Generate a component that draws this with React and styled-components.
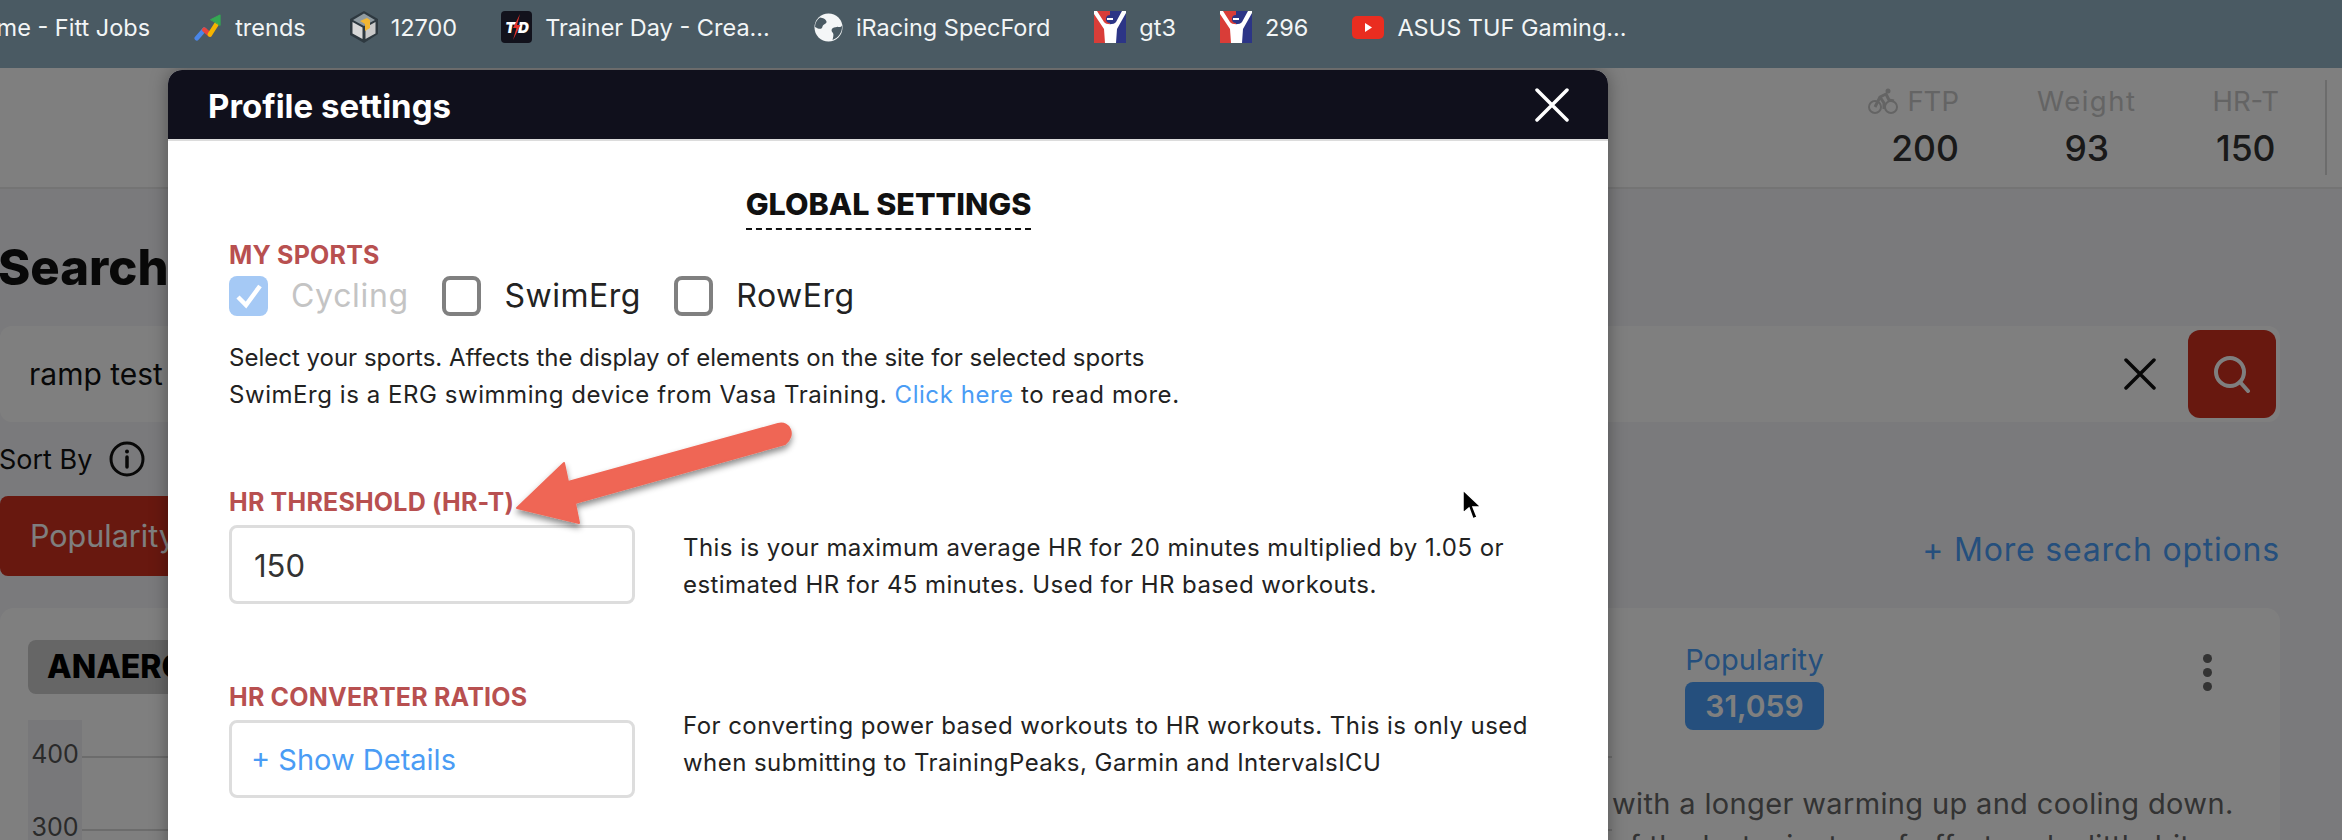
import React from "react";
import styled, { createGlobalStyle } from "styled-components";

const SANS = `"Inter", "Open Sans", "Liberation Sans", sans-serif`;

const GlobalStyle = createGlobalStyle`
  html, body {
    margin: 0;
    padding: 0;
    width: 2342px;
    height: 840px;
    overflow: hidden;
    background: #f4f4f8;
  }
  * { box-sizing: border-box; }
`;

const Screen = styled.div`
  width: 2342px;
  height: 840px;
  overflow: hidden;
  display: flex;
  flex-direction: column;
  font-family: ${SANS};
`;

/* browser bookmarks */
const BookmarkBar = styled.div`
  flex: 0 0 68px;
  background: #4a5a63;
  display: flex;
  align-items: flex-start;
  gap: 44px;
  padding-top: 11px;
  overflow: hidden;
  white-space: nowrap;
`;
const Bookmark = styled.div`
  display: flex;
  align-items: center;
  gap: 13px;
  height: 32px;
  color: #f2f5f6;
  font-size: 23.5px;
  svg { flex: none; }
`;
const ClippedBookmark = styled(Bookmark)`
  margin-left: -35px;
`;

/* page behind the dialog */
const Stage = styled.div`
  position: relative;
  flex: 1;
  overflow: hidden;
  background: #f5f5f8;
`;
const TopBar = styled.header`
  height: 121px;
  background: #ffffff;
  border-bottom: 2px solid #e8e8e8;
  display: flex;
  justify-content: flex-end;
  align-items: center;
  padding-right: 15px;
`;
const Stats = styled.div`
  display: flex;
  gap: 76px;
  padding-right: 46px;
  height: 95px;
  padding-top: 2px;
  border-right: 2px solid #d8d8d8;
`;
const Stat = styled.div`
  display: flex;
  flex-direction: column;
  align-items: ${(p) => (p.$end ? "flex-end" : "center")};
  margin-right: ${(p) => (p.$end ? 2 : 0)}px;
  gap: 8px;
`;
const StatLabel = styled.div`
  display: flex;
  align-items: center;
  gap: 9px;
  color: #c8c8c8;
  font-size: 27.5px;
  letter-spacing: ${(p) => (p.$wide ? 1.5 : 0)}px;
  line-height: 38px;
`;
const StatValue = styled.div`
  color: #333;
  font-size: 35.5px;
  font-weight: 500;
  line-height: 42px;
`;
const Content = styled.main`
  padding-right: 62px;
`;
const PageTitle = styled.h1`
  margin: 43px 0 0 -2px;
  font-size: 49px;
  font-weight: 800;
  line-height: 72px;
  color: #111;
`;
const SearchBar = styled.div`
  margin-top: 22px;
  height: 96px;
  background: #ffffff;
  border-radius: 12px;
  display: flex;
  align-items: center;
  padding: 0 4px 0 29px;
`;
const SearchText = styled.div`
  flex: 1;
  font-size: 30px;
  color: #111;
`;
const ClearIcon = styled.svg`
  width: 32px;
  height: 32px;
  margin-right: 32px;
`;
const SearchButton = styled.button`
  width: 88px;
  height: 88px;
  border: 0;
  border-radius: 12px;
  background: #d1301f;
  display: flex;
  align-items: center;
  justify-content: center;
  padding: 0;
`;
const SortRow = styled.div`
  margin: 18px 0 0 -1px;
  height: 38px;
  display: flex;
  align-items: center;
  gap: 17px;
  font-size: 27px;
  color: #111;
`;
const SortOptions = styled.div`
  margin-top: 18px;
  height: 80px;
  display: flex;
  justify-content: space-between;
  align-items: flex-end;
`;
const SortButton = styled.div`
  width: 300px;
  height: 80px;
  border-radius: 8px;
  background: #d1301f;
  color: #ffffff;
  font-size: 30.5px;
  line-height: 80px;
  padding-left: 30px;
`;
const MoreLink = styled.div`
  color: #4a9ffa;
  font-size: 32px;
  letter-spacing: 0.8px;
  line-height: 52px;
`;
const Card = styled.section`
  margin-top: 32px;
  height: 300px;
  background: #ffffff;
  border-radius: 14px;
  padding: 32px 0 0 28px;
  display: flex;
`;
const CardLeft = styled.div`
  width: 1584px;
`;
const Zone = styled.div`
  display: inline-block;
  height: 54px;
  line-height: 54px;
  padding: 0 19px;
  border-radius: 8px;
  background: #cccccc;
  color: #000;
  font-size: 32px;
  font-weight: 800;
`;
const Chart = styled.div`
  margin-top: 26px;
`;
const AxisRow = styled.div`
  height: 73px;
  display: flex;
  align-items: center;
`;
const AxisLabel = styled.div`
  width: 54px;
  height: 100%;
  background: #f0f0f4;
  color: #555;
  font-size: 25px;
  line-height: 69px;
  text-align: center;
`;
const GridLine = styled.div`
  flex: 1;
  height: 2px;
  background: #d8d8d8;
`;
const CardRight = styled.div`
  width: 625px;
`;
const CardHead = styled.div`
  display: flex;
  justify-content: space-between;
  padding: 0 25px 0 73px;
  height: 90px;
`;
const Popularity = styled.div`
  width: 139px;
  color: #4a9ffa;
  font-size: 29px;
  line-height: 40px;
  text-align: center;
  white-space: nowrap;
`;
const PopularityValue = styled.div`
  margin-top: 2px;
  height: 48px;
  border-radius: 8px;
  background: #4a9ffa;
  color: #ffffff;
  font-size: 30px;
  font-weight: 600;
  line-height: 48px;
`;
const Dots = styled.div`
  margin-top: 14px;
  display: flex;
  flex-direction: column;
  gap: 5px;
  span {
    display: block;
    width: 9px;
    height: 9px;
    border-radius: 50%;
    background: #666;
  }
`;
const Description = styled.p`
  margin: 53px 0 0;
  width: 720px;
  color: #666;
  font-size: 29px;
  letter-spacing: 0.35px;
  line-height: 42px;
`;

const Dim = styled.div`
  position: absolute;
  inset: 0;
  background: rgba(0, 0, 0, 0.5);
`;

/* dialog */
const Dialog = styled.div`
  position: absolute;
  top: 2px;
  left: 168px;
  width: 1440px;
  height: 900px;
  background: #ffffff;
  border-radius: 14px 14px 0 0;
  box-shadow: 0 0 18px rgba(0, 0, 0, 0.35);
`;
const DialogHead = styled.div`
  height: 71px;
  background: #10101c;
  border-radius: 14px 14px 0 0;
  border-bottom: 2px solid #dcdcdc;
  display: flex;
  align-items: center;
  justify-content: space-between;
  padding: 3px 39px 0 40px;
  color: #fff;
  font-size: 33px;
  font-weight: 700;
`;
const CloseIcon = styled.svg`
  margin-top: -3px;
`;
const DialogBody = styled.div`
  padding: 46px 60px 0 61px;
`;
const GlobalHeading = styled.div`
  width: fit-content;
  margin: 0 auto;
  border-bottom: 2px dashed #111;
  color: #111;
  font-size: 30.5px;
  font-weight: 800;
  line-height: 34px;
  height: 43px;
`;
const FieldLabel = styled.div`
  color: #b85050;
  font-size: 25px;
  font-weight: 700;
  line-height: 36px;
  letter-spacing: 0.2px;
`;
const SportsLabel = styled(FieldLabel)`
  margin-top: 7px;
`;
const Sports = styled.div`
  display: flex;
  align-items: center;
  gap: 33.5px;
  margin-top: 3px;
`;
const Sport = styled.label`
  display: flex;
  align-items: center;
  gap: 23px;
  font-size: 32px;
  letter-spacing: ${(p) => (p.$disabled ? 0.7 : 0.5)}px;
  line-height: 40px;
  color: ${(p) => (p.$disabled ? "#c4c4c4" : "#222")};
`;
const Box = styled.span`
  width: 39px;
  height: 40px;
  border-radius: 8px;
  display: flex;
  align-items: center;
  justify-content: center;
  background: ${(p) => (p.$checked ? "#a5c9f5" : "#fff")};
  border: ${(p) => (p.$checked ? "0" : "4px solid #808080")};
`;
const Help = styled.p`
  margin: ${(p) => p.$top || 0}px 0 0;
  color: #222;
  font-size: 24px;
  line-height: 36.5px;
`;
const WideLine = styled.span`
  letter-spacing: 0.55px;
`;
const Link = styled.a`
  color: #4a9cf5;
`;
const Field = styled.div`
  margin-top: ${(p) => p.$top}px;
`;
const FieldRow = styled.div`
  display: flex;
  gap: 48px;
  margin-top: 5px;
`;
const InputBox = styled.div`
  flex: 0 0 406px;
  height: ${(p) => p.$h}px;
  border: 3px solid #dddddd;
  border-radius: 8px;
  display: flex;
  align-items: center;
  padding: ${(p) => (p.$link ? "0 0 0 19px" : "2px 0 0 22px")};
  font-size: ${(p) => (p.$link ? 29 : 31)}px;
  color: ${(p) => (p.$link ? "#4a9cf5" : "#333")};
`;
const FieldHelp = styled(Help)`
  letter-spacing: 0.45px;
`;

const ArrowLayer = styled.svg`
  position: absolute;
  left: 0;
  top: 0;
  overflow: visible;
  pointer-events: none;
`;
const Pointer = styled.svg`
  position: absolute;
  left: 1461px;
  top: 421px;
`;

function TrendsIcon() {
  return (
    <svg width="28" height="32" viewBox="0 0 30 32" fill="none" strokeWidth="5" strokeLinecap="round" strokeLinejoin="round">
      <path d="M3 28 L11 19" stroke="#4a86e8" />
      <path d="M11 19 L17 24" stroke="#e8453c" />
      <path d="M17 24 L24 13" stroke="#f4b400" />
      <path d="M18 8 L28 3 L28 14 Z" fill="#34a853" stroke="#34a853" strokeWidth="1" />
    </svg>
  );
}

function CubeIcon() {
  return (
    <svg width="28" height="32" viewBox="0 0 28 32">
      <path d="M14 0 L28 8 V23 L14 32 L0 24 V8 Z" fill="#2e3940" />
      <path d="M14 2.5 L25 9 L14 15 L3 9 Z" fill="#8f9aa0" />
      <path d="M2.5 11 L12.5 16.5 V28 L2.5 22.5 Z" fill="#d8d8d8" />
      <path d="M15.5 16.5 L25.5 11 V22.5 L15.5 28 Z" fill="#c9c9c9" />
      <path d="M10 10 L17 7 L20 9 V17 L15 20 V13 Z" fill="#f2b632" />
    </svg>
  );
}

function TrainerDayIcon() {
  return (
    <svg width="31" height="32" viewBox="0 0 31 32">
      <rect width="31" height="32" rx="4" fill="#12121c" />
      <text x="4" y="22" fill="#fff" fontSize="15" fontWeight="900" fontStyle="italic" fontFamily="Inter, sans-serif">T</text>
      <text x="17" y="22" fill="#fff" fontSize="15" fontWeight="900" fontStyle="italic" fontFamily="Inter, sans-serif">D</text>
      <path d="M19 3 L12 17 H15.5 L12 29 L19.5 14 H16 Z" fill="#e5322a" />
    </svg>
  );
}

function GlobeIcon() {
  return (
    <svg width="29" height="29" viewBox="0 0 29 29">
      <circle cx="14.5" cy="14.5" r="14" fill="#f4f6f7" />
      <path d="M6 4.5 C9 5 12 6 12.5 8.5 C13 11 9 11 8.5 13.5 C8 16 6 17 1 14 C1 10 3 6.5 6 4.5 Z" fill="#4a5a63" />
      <path d="M28 12.5 C27 15 24 13.5 20 14.5 C17 15.5 17 18 19 20 C20 22 19 24.5 18.5 27 C24 25 28.5 20 28 12.5 Z" fill="#4a5a63" />
    </svg>
  );
}

function RacerIcon() {
  return (
    <svg width="32" height="32" viewBox="0 0 32 32">
      <rect width="16" height="32" fill="#d93d38" />
      <rect x="16" width="16" height="32" fill="#2c3586" />
      <path d="M0 0 H3 L10 11 C12 14 20 14 22 11 L28 0 H32 L32 2 L23 18 L22 32 H11 L10 18 L0 3 Z" fill="#fff" />
      <circle cx="16" cy="8" r="4" fill="#2c3586" />
      <rect x="13" y="7" width="6" height="2" fill="#fff" />
    </svg>
  );
}

function YoutubeIcon() {
  return (
    <svg width="32" height="23" viewBox="0 0 32 23">
      <rect width="32" height="23" rx="5" fill="#ea2d20" />
      <path d="M13 7 L20 11.5 L13 16 Z" fill="#fff" />
    </svg>
  );
}

function BikeIcon() {
  return (
    <svg width="30" height="26" viewBox="0 0 30 26" fill="none" stroke="#c8c8c8" strokeWidth="2">
      <circle cx="7" cy="19" r="6" />
      <circle cx="23" cy="19" r="6" />
      <circle cx="20" cy="3" r="2.5" fill="#c8c8c8" stroke="none" />
      <path d="M7 19 L12 9 L18 6 L21 12 L26 13 M12 9 L16 15 V21" strokeWidth="3" strokeLinejoin="round" />
    </svg>
  );
}

function InfoIcon() {
  return (
    <svg width="36" height="36" viewBox="0 0 36 36" fill="none" stroke="#111" strokeWidth="3">
      <circle cx="18" cy="18" r="16" />
      <path d="M18 16 V26" strokeLinecap="round" strokeWidth="3.5" />
      <circle cx="18" cy="10.5" r="2" fill="#111" stroke="none" />
    </svg>
  );
}

function App() {
  return (
    <Screen>
      <GlobalStyle />
      <BookmarkBar>
        <ClippedBookmark>Home - Fitt Jobs</ClippedBookmark>
        <Bookmark><TrendsIcon />trends</Bookmark>
        <Bookmark><CubeIcon />12700</Bookmark>
        <Bookmark><TrainerDayIcon />Trainer Day - Crea...</Bookmark>
        <Bookmark><GlobeIcon />iRacing SpecFord</Bookmark>
        <Bookmark><RacerIcon />gt3</Bookmark>
        <Bookmark><RacerIcon />296</Bookmark>
        <Bookmark><YoutubeIcon />ASUS TUF Gaming...</Bookmark>
      </BookmarkBar>
      <Stage>
        <TopBar>
          <Stats>
            <Stat $end>
              <StatLabel><BikeIcon />FTP</StatLabel>
              <StatValue>200</StatValue>
            </Stat>
            <Stat>
              <StatLabel $wide>Weight</StatLabel>
              <StatValue>93</StatValue>
            </Stat>
            <Stat>
              <StatLabel>HR-T</StatLabel>
              <StatValue>150</StatValue>
            </Stat>
          </Stats>
        </TopBar>
        <Content>
          <PageTitle>Search</PageTitle>
          <SearchBar>
            <SearchText>ramp test</SearchText>
            <ClearIcon viewBox="0 0 32 32" fill="none" stroke="#111" strokeWidth="3.5" strokeLinecap="round">
              <path d="M2 2 L30 30 M30 2 L2 30" />
            </ClearIcon>
            <SearchButton>
              <svg width="38" height="38" viewBox="0 0 38 38" fill="none" stroke="#fff" strokeWidth="4" strokeLinecap="round">
                <circle cx="17" cy="17" r="14" />
                <path d="M27 27 L35 36" />
              </svg>
            </SearchButton>
          </SearchBar>
          <SortRow>Sort By <InfoIcon /></SortRow>
          <SortOptions>
            <SortButton>Popularity</SortButton>
            <MoreLink>+ More search options</MoreLink>
          </SortOptions>
          <Card>
            <CardLeft>
              <Zone>ANAEROBIC</Zone>
              <Chart>
                <AxisRow><AxisLabel>400</AxisLabel><GridLine /></AxisRow>
                <AxisRow><AxisLabel>300</AxisLabel><GridLine /></AxisRow>
              </Chart>
            </CardLeft>
            <CardRight>
              <CardHead>
                <Popularity>
                  Popularity
                  <PopularityValue>31,059</PopularityValue>
                </Popularity>
                <Dots><span /><span /><span /></Dots>
              </CardHead>
              <Description>
                with a longer warming up and cooling down.
                <br />
                of the last minutes of effort and a little bit
              </Description>
            </CardRight>
          </Card>
        </Content>
        <Dim />
        <Dialog>
          <DialogHead>
            Profile settings
            <CloseIcon width="34" height="34" viewBox="0 0 34 34" fill="none" stroke="#fff" strokeWidth="3.5" strokeLinecap="round">
              <path d="M2 2 L32 32 M32 2 L2 32" />
            </CloseIcon>
          </DialogHead>
          <DialogBody>
            <GlobalHeading>GLOBAL SETTINGS</GlobalHeading>
            <SportsLabel>MY SPORTS</SportsLabel>
            <Sports>
              <Sport $disabled>
                <Box $checked>
                  <svg width="28" height="26" viewBox="0 0 28 26" fill="none" stroke="#fff" strokeWidth="4.5">
                    <path d="M3 14 L11 22 L25 3" />
                  </svg>
                </Box>
                Cycling
              </Sport>
              <Sport><Box />SwimErg</Sport>
              <Sport><Box />RowErg</Sport>
            </Sports>
            <Help $top={24}>
              Select your sports. Affects the display of elements on the site for selected sports
              <br />
              <WideLine>SwimErg is a ERG swimming device from Vasa Training. <Link>Click here</Link> to read more.</WideLine>
            </Help>
            <Field $top={71}>
              <FieldLabel>HR THRESHOLD (HR-T)</FieldLabel>
              <FieldRow>
                <InputBox $h={79}>150</InputBox>
                <FieldHelp $top={5}>
                  This is your maximum average HR for 20 minutes multiplied by 1.05 or
                  <br />
                  estimated HR for 45 minutes. Used for HR based workouts.
                </FieldHelp>
              </FieldRow>
            </Field>
            <Field $top={75}>
              <FieldLabel>HR CONVERTER RATIOS</FieldLabel>
              <FieldRow>
                <InputBox $h={78} $link>+ Show Details</InputBox>
                <FieldHelp $top={-12}>
                  For converting power based workouts to HR workouts. This is only used
                  <br />
                  when submitting to TrainingPeaks, Garmin and IntervalsICU
                </FieldHelp>
              </FieldRow>
            </Field>
          </DialogBody>
        </Dialog>
        <ArrowLayer width="2342" height="772">
          <defs>
            <filter id="arrowShadow" x="-20%" y="-20%" width="140%" height="150%">
              <feDropShadow dx="0" dy="4" stdDeviation="3" floodColor="#000" floodOpacity="0.45" />
            </filter>
          </defs>
          <path
            d="M517 440 L564 395 L568 414 L778 356 C790 353 796 367 785 376 L575 435 L579 455 Z"
            fill="#ef6655"
            stroke="#ef6655"
            strokeWidth="2"
            strokeLinejoin="round"
            filter="url(#arrowShadow)"
          />
        </ArrowLayer>
        <Pointer width="24" height="34" viewBox="0 0 24 34">
          <path d="M2 1 L2 24 L8 19 L12 30 L16 28 L12 18 L20 18 Z" fill="#000" stroke="#fff" strokeWidth="1.5" />
        </Pointer>
      </Stage>
    </Screen>
  );
}

export default App;
